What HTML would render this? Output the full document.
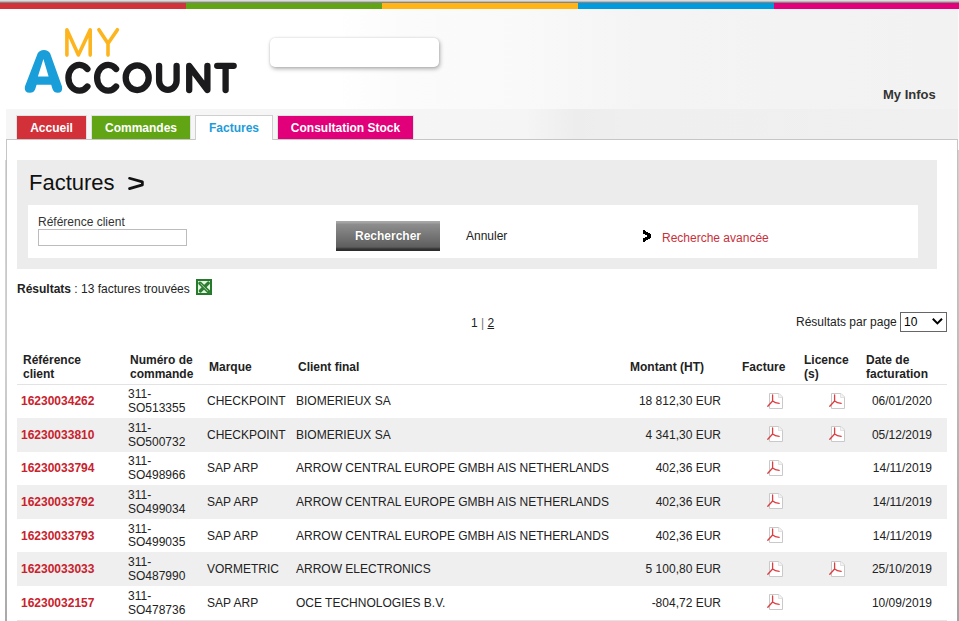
<!DOCTYPE html>
<html><head><meta charset="utf-8">
<style>
*{box-sizing:border-box}
html,body{margin:0;padding:0;width:959px;height:621px;overflow:hidden;background:#fff;font-family:"Liberation Sans",sans-serif;font-size:12px;color:#222}
.abs{position:absolute}
#topgray{left:0;top:0;width:959px;height:3px;background:linear-gradient(#e2e2e2 0,#d6d6d6 33%,#a0a0a0 66%,#6a6a6a 100%)}
.bar{top:3px;height:6px}
#header{left:6px;top:9px;width:952px;height:100px;background:linear-gradient(90deg,#fff 0,#fff 330px,#fbfbfb 400px,#f9f9f9 520px,#f4f4f4 640px,#f2f2f2 100%)}
#tabband{left:6px;top:109px;width:952px;height:30px;background:linear-gradient(90deg,#f6f6f6 0,#f5f5f5 520px,#ededed 570px,#efefef 620px,#f0f0f0 100%)}
#content{left:6px;top:139px;width:952px;height:500px;border:1px solid #c6c6c6;background:#fff}
.tab{top:115px;height:24px;border:1px solid #dde3e3;border-bottom:0;color:#fff;font-weight:bold;font-size:12px;text-align:center;line-height:25px}
#searchbox{left:270px;top:38px;width:169px;height:29px;background:#fff;border-radius:5px;box-shadow:1px 2px 4px rgba(0,0,0,0.3),0 0 2px rgba(0,0,0,0.15)}
.txt{white-space:nowrap;line-height:14px}
#tbl{border-collapse:collapse;table-layout:fixed;width:930px;font-size:12px;color:#222}
#tbl th{font-weight:bold;color:#222;text-align:left;padding:4.25px 2px 2.25px 6px;vertical-align:middle;line-height:normal;border-bottom:1px solid #e3e3e3}
#tbl td{padding:3.75px 4px 2.25px 4px;vertical-align:middle;line-height:13.8px;white-space:nowrap}
#tbl td.r{text-align:right;padding-right:15px}
#tbl td.ref{color:#c9222c;font-weight:bold}
#tbl tr.g td{background:#efefef}
#tbl tbody tr:last-child td{border-bottom:1px solid #e3e3e3}
</style></head><body>
<div id="topgray" class="abs"></div>
<div class="abs bar" style="left:0;width:186px;background:#d2323a"></div>
<div class="abs bar" style="left:186px;width:196px;background:#62a514"></div>
<div class="abs bar" style="left:382px;width:196px;background:#ffb516"></div>
<div class="abs bar" style="left:578px;width:196px;background:#009bdd"></div>
<div class="abs bar" style="left:774px;width:185px;background:#e2007b"></div>

<div id="header" class="abs"></div>
<div id="tabband" class="abs"></div>
<div id="searchbox" class="abs"></div>
<div class="abs txt" style="left:883px;top:88px;font-size:13px;font-weight:bold;color:#333">My Infos</div>

<!-- logo -->
<svg class="abs" style="left:0;top:0" width="260" height="110" viewBox="0 0 260 110">
  <g fill="none" stroke="#fdb51f" stroke-width="3.6" stroke-linecap="round" stroke-linejoin="round">
    <path d="M66.9,55.1 L66.9,29.8 L78.4,55 L90.2,29.8 L90.2,55.1"/>
    <path d="M98.9,29.7 L108,43.5 L117.4,29.7 M108,43.5 L108,55.1"/>
  </g>
  <path fill="#1a9ed9" fill-rule="evenodd" d="M24.9,86.5 L37.6,53.6 Q39.5,49.9 43.9,49.9 Q48.3,49.9 50.2,53.6 L62,86.5 Q63.2,92.8 57.6,92.8 Q54,92.8 52.6,89.2 L51.2,84.7 L36.6,84.7 L35.2,89.2 Q33.8,92.8 30,92.8 Q23.8,92.8 24.9,86.5 Z M43.4,59.1 L48.6,76.6 L37.9,76.6 Z"/>
  <g fill="none" stroke="#1b1a1c" stroke-width="6.3" stroke-linecap="round" stroke-linejoin="round">
    <path d="M87.4,69 A10.95,12.9 0 1 0 87.4,86.5"/>
    <path d="M116.1,69 A10.95,12.9 0 1 0 116.1,86.5"/>
    <ellipse cx="137.2" cy="77.7" rx="11.5" ry="12.4"/>
    <path d="M159.1,65.9 L159.1,80.5 A8.75,9.4 0 0 0 176.6,80.5 L176.6,65.9"/>
    <path d="M189.2,90 L189.2,65.9 L207.4,90 L207.4,65.9"/>
    <path d="M217.2,65.8 L233.7,65.8 M225.6,65.8 L225.6,90"/>
  </g>
</svg>

<!-- tabs -->
<div class="abs tab" style="left:16px;width:71px;background:#d2313a;background-clip:padding-box">Accueil</div>
<div class="abs tab" style="left:91px;width:100px;background:#62a514;background-clip:padding-box">Commandes</div>
<div id="content" class="abs"></div>
<div class="abs tab" style="left:195px;width:78px;height:25px;background:#fff;border-color:#cfcfcf;color:#1e9cd8">Factures</div>
<div class="abs tab" style="left:277px;width:137px;background:#e2007a;background-clip:padding-box">Consultation Stock</div>


<div class="abs" style="left:5px;top:160px;width:2px;height:461px;background:linear-gradient(rgba(190,190,190,0.6),#cfcfcf 45%,#a9a9a9 100%)"></div>
<div class="abs" style="left:957px;top:150px;width:2px;height:471px;background:linear-gradient(rgba(190,190,190,0.7),#bdbdbd 45%,#a3a3a3 100%)"></div>
<!-- search panel -->
<div class="abs" style="left:17px;top:160px;width:920px;height:109px;background:#ececec"></div>
<div class="abs txt" style="left:29px;top:171px;font-size:22px;line-height:24px;color:#111">Factures</div>
<svg class="abs" style="left:120px;top:170px" width="30" height="26" viewBox="120 170 30 26"><path d="M129.5,178.3 L142.4,181.9 L142.4,184.9 L129.5,188.6" fill="none" stroke="#111" stroke-width="2.7" stroke-linecap="round" stroke-linejoin="round"/></svg>
<div class="abs" style="left:28px;top:205px;width:890px;height:53px;background:#fff"></div>
<div class="abs txt" style="left:38px;top:215px;color:#333">R&eacute;f&eacute;rence client</div>
<div class="abs" style="left:38px;top:229px;width:149px;height:17px;border:1px solid #bcbcbc;background:#fff"></div>
<div class="abs txt" style="left:336px;top:221px;width:104px;height:30px;background:linear-gradient(#a9a9a9 0,#a2a2a2 2px,#8e8e8e 3px,#5e5e5e 26px,#333 28px,#2a2a2a 30px);color:#fff;font-weight:bold;text-align:center;line-height:30px;text-shadow:0 0 1px rgba(0,0,0,.35)">Rechercher</div>
<div class="abs txt" style="left:466px;top:229px;color:#222">Annuler</div>
<svg class="abs" style="left:640px;top:228px" width="14" height="16" viewBox="640 228 14 16" shape-rendering="crispEdges"><path d="M643,230 h2 v1 h1 v1 h2 v1 h2 v1 h1 v4 h-1 v1 h-2 v1 h-2 v1 h-1 v1 h-2 v-4 h2 v-1 h2 v-2 h-2 v-1 h-2 z" fill="#000"/></svg>
<div class="abs txt" style="left:662px;top:231px;color:#c8303a">Recherche avanc&eacute;e</div>

<!-- results -->
<div class="abs txt" style="left:17px;top:282px;color:#222"><b>R&eacute;sultats</b> : 13 factures trouv&eacute;es</div>
<svg class="abs" style="left:196px;top:279px" width="16" height="16" viewBox="0 0 16 16">
  <rect x="1" y="1" width="14" height="14" fill="#e6f5e2" stroke="#267a2b" stroke-width="2"/>
  <path d="M4,4.3 L12.6,12.6" stroke="#2e7d32" stroke-width="3.6" stroke-linecap="round"/>
  <path d="M12.4,4 L4.3,12" stroke="#2e7d32" stroke-width="3.2" stroke-linecap="round"/>
  <path d="M4.6,4.8 L12,12.2" stroke="#bfe9b8" stroke-width="0.8"/>
</svg>

<!-- pagination -->
<div class="abs txt" style="left:471px;top:316px;color:#222">1 <span style="color:#777">|</span> <span style="text-decoration:underline">2</span></div>
<div class="abs txt" style="left:796px;top:315px;color:#222">R&eacute;sultats par page</div>
<div class="abs" style="left:900px;top:312px;width:47px;height:20px;border:1px solid #666;background:#fff"></div>
<div class="abs txt" style="left:904px;top:315px;color:#000">10</div>
<svg class="abs" style="left:930px;top:316px" width="14" height="10" viewBox="930 316 14 10"><path d="M932.8,318.8 L937.4,323.4 L942,318.8" fill="none" stroke="#000" stroke-width="2"/></svg>

<!-- table -->
<table id="tbl" class="abs" style="left:17px;top:349px">
<colgroup><col style="width:107px"><col style="width:79px"><col style="width:89px"><col style="width:332px"><col style="width:112px"><col style="width:62px"><col style="width:62px"><col style="width:87px"></colgroup>
<thead><tr><th>R&eacute;f&eacute;rence<br>client</th><th>Num&eacute;ro de<br>commande</th><th>Marque</th><th>Client final</th><th>Montant (HT)</th><th>Facture</th><th>Licence<br>(s)</th><th>Date de<br>facturation</th></tr></thead>
<tbody>
<tr><td class="ref">16230034262</td><td>311-<br>SO513355</td><td>CHECKPOINT</td><td>BIOMERIEUX SA</td><td class="r">18 812,30 EUR</td><td class="r"><svg width="17" height="17" viewBox="0 0 17 17" style="vertical-align:middle;margin-right:-1px;position:relative;top:-1px"><path d="M2.5,0.5 L12,0.5 L15.5,4 L15.5,15.5 L2.5,15.5 Z" fill="#fff" stroke="#c9c9c9" stroke-width="1"/><path d="M11.5,0.5 L11.5,4.5 L15.5,4.5" fill="#f2f2f2" stroke="#dcdcdc" stroke-width="0.8"/><path d="M5.6,2 L5.6,8 M5.6,8 L0.8,13.3 M5.6,8 Q8,10 12.2,10.3" fill="none" stroke="#dc3f42" stroke-width="1.3" stroke-linecap="round"/></svg></td><td class="r"><svg width="17" height="17" viewBox="0 0 17 17" style="vertical-align:middle;margin-right:-1px;position:relative;top:-1px"><path d="M2.5,0.5 L12,0.5 L15.5,4 L15.5,15.5 L2.5,15.5 Z" fill="#fff" stroke="#c9c9c9" stroke-width="1"/><path d="M11.5,0.5 L11.5,4.5 L15.5,4.5" fill="#f2f2f2" stroke="#dcdcdc" stroke-width="0.8"/><path d="M5.6,2 L5.6,8 M5.6,8 L0.8,13.3 M5.6,8 Q8,10 12.2,10.3" fill="none" stroke="#dc3f42" stroke-width="1.3" stroke-linecap="round"/></svg></td><td class="r">06/01/2020</td></tr>
<tr class="g"><td class="ref">16230033810</td><td>311-<br>SO500732</td><td>CHECKPOINT</td><td>BIOMERIEUX SA</td><td class="r">4 341,30 EUR</td><td class="r"><svg width="17" height="17" viewBox="0 0 17 17" style="vertical-align:middle;margin-right:-1px;position:relative;top:-1px"><path d="M2.5,0.5 L12,0.5 L15.5,4 L15.5,15.5 L2.5,15.5 Z" fill="#fff" stroke="#c9c9c9" stroke-width="1"/><path d="M11.5,0.5 L11.5,4.5 L15.5,4.5" fill="#f2f2f2" stroke="#dcdcdc" stroke-width="0.8"/><path d="M5.6,2 L5.6,8 M5.6,8 L0.8,13.3 M5.6,8 Q8,10 12.2,10.3" fill="none" stroke="#dc3f42" stroke-width="1.3" stroke-linecap="round"/></svg></td><td class="r"><svg width="17" height="17" viewBox="0 0 17 17" style="vertical-align:middle;margin-right:-1px;position:relative;top:-1px"><path d="M2.5,0.5 L12,0.5 L15.5,4 L15.5,15.5 L2.5,15.5 Z" fill="#fff" stroke="#c9c9c9" stroke-width="1"/><path d="M11.5,0.5 L11.5,4.5 L15.5,4.5" fill="#f2f2f2" stroke="#dcdcdc" stroke-width="0.8"/><path d="M5.6,2 L5.6,8 M5.6,8 L0.8,13.3 M5.6,8 Q8,10 12.2,10.3" fill="none" stroke="#dc3f42" stroke-width="1.3" stroke-linecap="round"/></svg></td><td class="r">05/12/2019</td></tr>
<tr><td class="ref">16230033794</td><td>311-<br>SO498966</td><td>SAP ARP</td><td>ARROW CENTRAL EUROPE GMBH AIS NETHERLANDS</td><td class="r">402,36 EUR</td><td class="r"><svg width="17" height="17" viewBox="0 0 17 17" style="vertical-align:middle;margin-right:-1px;position:relative;top:-1px"><path d="M2.5,0.5 L12,0.5 L15.5,4 L15.5,15.5 L2.5,15.5 Z" fill="#fff" stroke="#c9c9c9" stroke-width="1"/><path d="M11.5,0.5 L11.5,4.5 L15.5,4.5" fill="#f2f2f2" stroke="#dcdcdc" stroke-width="0.8"/><path d="M5.6,2 L5.6,8 M5.6,8 L0.8,13.3 M5.6,8 Q8,10 12.2,10.3" fill="none" stroke="#dc3f42" stroke-width="1.3" stroke-linecap="round"/></svg></td><td class="r"></td><td class="r">14/11/2019</td></tr>
<tr class="g"><td class="ref">16230033792</td><td>311-<br>SO499034</td><td>SAP ARP</td><td>ARROW CENTRAL EUROPE GMBH AIS NETHERLANDS</td><td class="r">402,36 EUR</td><td class="r"><svg width="17" height="17" viewBox="0 0 17 17" style="vertical-align:middle;margin-right:-1px;position:relative;top:-1px"><path d="M2.5,0.5 L12,0.5 L15.5,4 L15.5,15.5 L2.5,15.5 Z" fill="#fff" stroke="#c9c9c9" stroke-width="1"/><path d="M11.5,0.5 L11.5,4.5 L15.5,4.5" fill="#f2f2f2" stroke="#dcdcdc" stroke-width="0.8"/><path d="M5.6,2 L5.6,8 M5.6,8 L0.8,13.3 M5.6,8 Q8,10 12.2,10.3" fill="none" stroke="#dc3f42" stroke-width="1.3" stroke-linecap="round"/></svg></td><td class="r"></td><td class="r">14/11/2019</td></tr>
<tr><td class="ref">16230033793</td><td>311-<br>SO499035</td><td>SAP ARP</td><td>ARROW CENTRAL EUROPE GMBH AIS NETHERLANDS</td><td class="r">402,36 EUR</td><td class="r"><svg width="17" height="17" viewBox="0 0 17 17" style="vertical-align:middle;margin-right:-1px;position:relative;top:-1px"><path d="M2.5,0.5 L12,0.5 L15.5,4 L15.5,15.5 L2.5,15.5 Z" fill="#fff" stroke="#c9c9c9" stroke-width="1"/><path d="M11.5,0.5 L11.5,4.5 L15.5,4.5" fill="#f2f2f2" stroke="#dcdcdc" stroke-width="0.8"/><path d="M5.6,2 L5.6,8 M5.6,8 L0.8,13.3 M5.6,8 Q8,10 12.2,10.3" fill="none" stroke="#dc3f42" stroke-width="1.3" stroke-linecap="round"/></svg></td><td class="r"></td><td class="r">14/11/2019</td></tr>
<tr class="g"><td class="ref">16230033033</td><td>311-<br>SO487990</td><td>VORMETRIC</td><td>ARROW ELECTRONICS</td><td class="r">5 100,80 EUR</td><td class="r"><svg width="17" height="17" viewBox="0 0 17 17" style="vertical-align:middle;margin-right:-1px;position:relative;top:-1px"><path d="M2.5,0.5 L12,0.5 L15.5,4 L15.5,15.5 L2.5,15.5 Z" fill="#fff" stroke="#c9c9c9" stroke-width="1"/><path d="M11.5,0.5 L11.5,4.5 L15.5,4.5" fill="#f2f2f2" stroke="#dcdcdc" stroke-width="0.8"/><path d="M5.6,2 L5.6,8 M5.6,8 L0.8,13.3 M5.6,8 Q8,10 12.2,10.3" fill="none" stroke="#dc3f42" stroke-width="1.3" stroke-linecap="round"/></svg></td><td class="r"><svg width="17" height="17" viewBox="0 0 17 17" style="vertical-align:middle;margin-right:-1px;position:relative;top:-1px"><path d="M2.5,0.5 L12,0.5 L15.5,4 L15.5,15.5 L2.5,15.5 Z" fill="#fff" stroke="#c9c9c9" stroke-width="1"/><path d="M11.5,0.5 L11.5,4.5 L15.5,4.5" fill="#f2f2f2" stroke="#dcdcdc" stroke-width="0.8"/><path d="M5.6,2 L5.6,8 M5.6,8 L0.8,13.3 M5.6,8 Q8,10 12.2,10.3" fill="none" stroke="#dc3f42" stroke-width="1.3" stroke-linecap="round"/></svg></td><td class="r">25/10/2019</td></tr>
<tr><td class="ref">16230032157</td><td>311-<br>SO478736</td><td>SAP ARP</td><td>OCE TECHNOLOGIES B.V.</td><td class="r">-804,72 EUR</td><td class="r"><svg width="17" height="17" viewBox="0 0 17 17" style="vertical-align:middle;margin-right:-1px;position:relative;top:-1px"><path d="M2.5,0.5 L12,0.5 L15.5,4 L15.5,15.5 L2.5,15.5 Z" fill="#fff" stroke="#c9c9c9" stroke-width="1"/><path d="M11.5,0.5 L11.5,4.5 L15.5,4.5" fill="#f2f2f2" stroke="#dcdcdc" stroke-width="0.8"/><path d="M5.6,2 L5.6,8 M5.6,8 L0.8,13.3 M5.6,8 Q8,10 12.2,10.3" fill="none" stroke="#dc3f42" stroke-width="1.3" stroke-linecap="round"/></svg></td><td class="r"></td><td class="r">10/09/2019</td></tr>
</tbody></table>
</body></html>
